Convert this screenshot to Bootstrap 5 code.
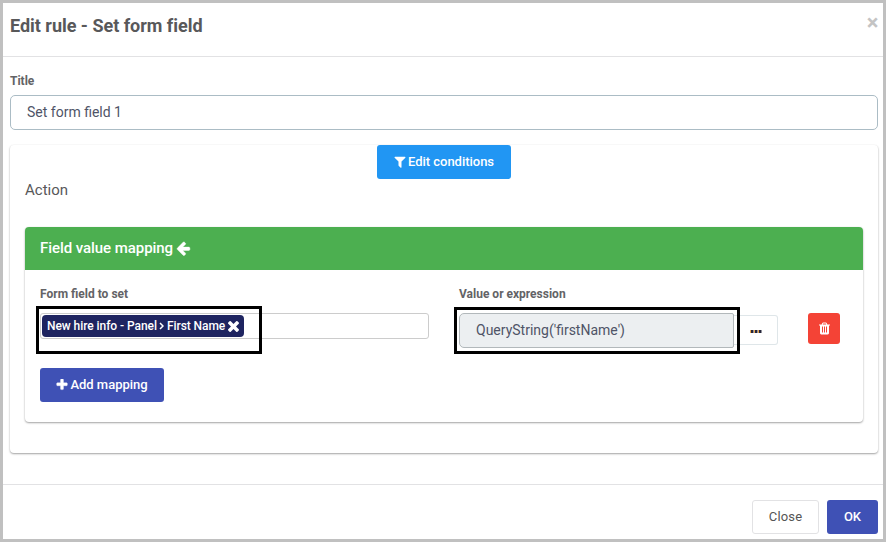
<!DOCTYPE html>
<html lang="en">
<head>
<meta charset="utf-8">
<title>Edit rule</title>
<meta name="viewport" content="width=device-width, initial-scale=1">
<link href="https://cdn.jsdelivr.net/npm/bootstrap@5.3.0/dist/css/bootstrap.min.css" rel="stylesheet">
<style>
body{font-family:Roboto,"Liberation Sans",sans-serif;font-size:13px;line-height:18px;color:#58585a;height:542px;overflow:hidden}
.rule-dialog{height:542px;border:3px solid #c0c0c0;background:#fff}
.rule-head{height:54px;border-bottom:1px solid #e2e2e4;padding:10px 4px 0 7px}
.rule-title{font-size:18px;line-height:26px;font-weight:700;color:#58585a;letter-spacing:-.02px}
.dismiss{width:13px;height:18px;color:#c4c4c4;font-size:22px;font-weight:700;line-height:17px}
.rule-body{height:428px;padding:15px 5px 0 7px;border-bottom:1px solid #e2e2e4}
.field-label{display:block;font-size:12px;line-height:18px;font-weight:700;color:#636366}
.title-label{margin-bottom:5px}
.map-label{margin-bottom:10px}
.text-field{height:35px;border:1px solid #abbcc5;border-radius:5px;padding:0 16px 2px;font-size:14px;color:#4f5467;box-shadow:none}
.panel{border:0;border-radius:4px;box-shadow:0 1px 2px rgba(0,0,0,.36),0 0 2px rgba(0,0,0,.04)}
.outer-panel{height:308px;margin-top:15px;padding:0 15px}
.action-label{font-size:15px;line-height:20px;margin-top:1px;margin-bottom:27px}
.inner-panel{height:195px}
.panel-bar{height:43px;background:#4caf50;border-radius:4px 4px 0 0;color:#fff;font-size:15px;font-weight:500;padding:0 15px 1px;letter-spacing:-.06px}
.bar-arrow{margin-left:3px}
.tone-btn{height:34px;border:0;border-radius:3px;font-size:13px;line-height:18px;font-weight:500;color:#fff;padding:0}
.tone-blue,.tone-blue:hover{background:#2196f3;width:134px;color:#fff}
.tone-indigo,.tone-indigo:hover{background:#3f51b5;color:#fff}
.add-row{padding:15px 15px 0}
.add-btn{width:124px}
.btn-text{margin-left:2px;letter-spacing:-.02px}
.ok-btn{width:51px}
.close-btn{width:67px;height:34px;border:1px solid #e2e2e4;border-radius:3px;font-size:13px;line-height:18px;padding:0;color:#555;letter-spacing:.15px}
.del-btn,.del-btn:hover{width:32px;height:31px;background:#f44336;border-radius:3px;margin-left:30px}
.more-btn{width:44px;height:30px;border:1px solid #dfe6e9;border-left:0;border-radius:0 3px 3px 0;margin-top:2px;padding:2px 0 0}
.map-grid{display:grid;grid-template-columns:389px 1fr;column-gap:30px;padding:15px 15px 0;height:83px}
.picker{height:26px;border:1px solid #ccc;border-radius:3px;padding:1px}
.picker-tag{width:202px;height:22px;background:#1e2460;border-radius:4px;color:#fff;font-size:12px;line-height:22px;font-weight:500;padding-left:5px;white-space:nowrap;letter-spacing:-.06px}
.tag-sep{margin:0 3px 0 2px}
.tag-x{margin-left:3px}
.expr{width:275px;height:35px;background:#eceff1;border:1px solid #b2b8bb;border-radius:5px 2px 2px 5px;padding:0 16px 1px;font-size:14px;color:#4f5467}
.callout{position:absolute;border:3px solid #000;pointer-events:none}
.callout-field{left:-5px;top:-8px;width:226px;height:48px}
.callout-expr{left:-6px;top:-7px;width:286px;height:47px}
.rule-foot{padding:15px 5px 0 0;gap:8px}
svg{display:block;flex:none}
</style>
</head>
<body>
<div class="rule-dialog">
  <header class="rule-head d-flex justify-content-between align-items-start">
    <h1 class="rule-title m-0">Edit rule - Set form field</h1>
    <button type="button" class="btn p-0 border-0 dismiss" aria-label="Close">×</button>
  </header>
  <main class="rule-body">
    <label class="field-label title-label" for="ruleTitle">Title</label>
    <input id="ruleTitle" class="form-control text-field" value="Set form field 1">
    <section class="card panel outer-panel">
      <div class="d-flex justify-content-center">
        <button type="button" class="btn tone-btn tone-blue d-flex align-items-center justify-content-center"><svg width="12" height="13" viewBox="130 150 1532 1660" fill="currentColor"><path d="M1595 295q17 41-14 70l-493 493v742q0 42-39 59-13 5-25 5-27 0-45-19l-256-256q-19-19-19-45v-486l-493-493q-31-29-14-70 17-39 59-39h1280q42 0 59 39z"/></svg><span class="btn-text">Edit conditions</span></button>
      </div>
      <div class="action-label">Action</div>
      <div class="card panel inner-panel">
        <div class="panel-bar d-flex align-items-center">Field value mapping<svg class="bar-arrow" width="15" height="15" viewBox="64 0 1728 1728" fill="currentColor"><path d="M1664 896v128q0 53-32.5 90.5t-84.5 37.5h-704l293 294q38 36 38 90t-38 90l-75 76q-37 37-90 37-52 0-91-37l-651-652q-37-37-37-90 0-52 37-91l651-650q38-38 91-38 52 0 90 38l75 74q38 38 38 91t-38 91l-293 293h704q52 0 84.5 37.5t32.5 90.5z" transform="translate(0 -64)" stroke="currentColor" stroke-width="50"/></svg></div>
        <div class="map-grid">
          <div>
            <span class="field-label map-label">Form field to set</span>
            <div class="picker position-relative">
              <div class="picker-tag d-flex align-items-center"><span>New hire info - Panel</span><svg class="tag-sep" width="5" height="8" viewBox="0 0 5 8" fill="none" stroke="currentColor" stroke-width="1.5"><path d="M1 1l3 3-3 3"/></svg><span>First Name</span><svg class="tag-x" width="11" height="11" viewBox="302 366 1188 1188" fill="currentColor"><path d="M1490 1322q0 40-28 68l-136 136q-28 28-68 28t-68-28l-294-294-294 294q-28 28-68 28t-68-28l-136-136q-28-28-28-68t28-68l294-294-294-294q-28-28-28-68t28-68l136-136q28-28 68-28t68 28l294 294 294-294q28-28 68-28t68 28l136 136q28 28 28 68t-28 68l-294 294 294 294q28 28 28 68z"/></svg></div>
              <span class="callout callout-field"></span>
            </div>
          </div>
          <div>
            <span class="field-label map-label">Value or expression</span>
            <div class="d-flex align-items-start">
              <div class="expr position-relative d-flex align-items-center">QueryString('firstName')<span class="callout callout-expr"></span></div>
              <button type="button" class="btn more-btn d-flex align-items-center justify-content-center" aria-label="More"><svg width="12" height="3" viewBox="0 0 12 3"><path fill="#e8a34a" d="M0 0h1v3H0zM4 0h1v3H4zM8 0h1v3H8z"/><path fill="#26263a" d="M1 0h2.5v3H1zM5 0h2.5v3H5zM9 0h2.5v3H9z"/></svg></button>
              <button type="button" class="btn border-0 p-0 del-btn d-flex align-items-center justify-content-center" aria-label="Delete"><svg width="13" height="13" viewBox="64 64 1664 1664" fill="#fff"><path d="M704 1376v-704q0-14-9-23t-23-9h-64q-14 0-23 9t-9 23v704q0 14 9 23t23 9h64q14 0 23-9t9-23zm256 0v-704q0-14-9-23t-23-9h-64q-14 0-23 9t-9 23v704q0 14 9 23t23 9h64q14 0 23-9t9-23zm256 0v-704q0-14-9-23t-23-9h-64q-14 0-23 9t-9 23v704q0 14 9 23t23 9h64q14 0 23-9t9-23zm-544-992h448l-48-117q-7-9-17-11h-317q-10 2-17 11zm928 32v64q0 14-9 23t-23 9h-96v948q0 83-47 143.5t-113 60.5h-832q-66 0-113-58.5t-47-141.5v-952h-96q-14 0-23-9t-9-23v-64q0-14 9-23t23-9h309l70-167q15-37 54-63t79-26h320q40 0 79 26t54 63l70 167h309q14 0 23 9t9 23z"/></svg></button>
            </div>
          </div>
        </div>
        <div class="add-row">
          <button type="button" class="btn tone-btn tone-indigo add-btn d-flex align-items-center justify-content-center"><svg width="12" height="12" viewBox="100 130 1592 1592" fill="currentColor" stroke="currentColor" stroke-width="50"><path d="M1600 736v192q0 40-28 68t-68 28h-416v416q0 40-28 68t-68 28h-192q-40 0-68-28t-28-68v-416h-416q-40 0-68-28t-28-68v-192q0-40 28-68t68-28h416v-416q0-40 28-68t68-28h192q40 0 68 28t28 68v416h416q40 0 68 28t28 68z"/></svg><span class="btn-text">Add mapping</span></button>
        </div>
      </div>
    </section>
  </main>
  <footer class="rule-foot d-flex justify-content-end">
    <button type="button" class="btn close-btn">Close</button>
    <button type="button" class="btn tone-btn tone-indigo ok-btn">OK</button>
  </footer>
</div>
</body>
</html>
